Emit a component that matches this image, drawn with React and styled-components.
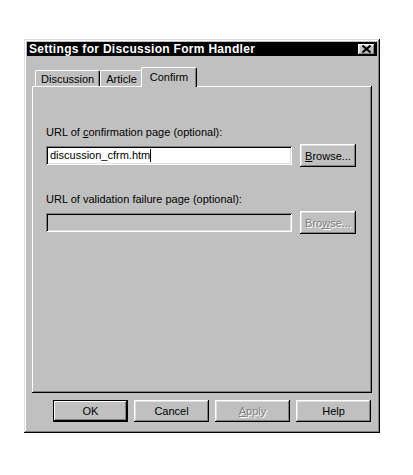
import React from "react";
import styled, { createGlobalStyle, css } from "styled-components";

const GlobalStyle = createGlobalStyle`
  html, body {
    margin: 0;
    padding: 0;
    background: #ffffff;
  }
  body {
    font-family: "Liberation Sans", Arial, sans-serif;
    font-size: 11px;
    color: #000000;
  }
`;

const raised = css`
  box-shadow: inset -1px -1px 0 #000000, inset 1px 1px 0 #ffffff,
    inset -2px -2px 0 #808080, inset 2px 2px 0 #dfdfdf;
`;

const sunken = css`
  box-shadow: inset 1px 1px 0 #808080, inset -1px -1px 0 #ffffff,
    inset 2px 2px 0 #000000, inset -2px -2px 0 #dfdfdf;
`;

const Page = styled.div`
  padding: 39px 0 0 24px;
  height: 475px;
  box-sizing: border-box;
`;

const Window = styled.div`
  width: 356px;
  height: 394px;
  box-sizing: border-box;
  background: #c0c0c0;
  padding: 3px;
  display: flex;
  flex-direction: column;
  box-shadow: inset -1px -1px 0 #000000, inset 1px 1px 0 #dfdfdf,
    inset -2px -2px 0 #808080, inset 2px 2px 0 #ffffff;
`;

const TitleBar = styled.div`
  height: 14px;
  background: #000000;
  color: #ffffff;
  display: flex;
  align-items: center;
  justify-content: space-between;
  padding: 0 2px 0 2px;
`;

const Title = styled.span`
  font-weight: bold;
  font-size: 12px;
  letter-spacing: 0.3px;
`;

const CloseButton = styled.div`
  width: 17px;
  height: 11px;
  background: #c0c0c0;
  color: #000000;
  display: flex;
  align-items: center;
  justify-content: center;
  ${raised}
`;

const Body = styled.div`
  flex: 1;
  display: flex;
  flex-direction: column;
  padding: 10px 5px 0 5px;
`;

const TabRow = styled.div`
  display: flex;
  align-items: flex-end;
  height: 20px;
  padding-left: 3px;
  position: relative;
  z-index: 1;
`;

const Tab = styled.div`
  height: ${(p) => (p.$active ? "20px" : "16px")};
  box-sizing: border-box;
  padding: ${(p) => (p.$active ? "3px 8px 0 8px" : "2px 5px 0 5px")};
  margin: ${(p) => (p.$active ? "0 -2px 0 -2px" : "0")};
  margin-bottom: ${(p) => (p.$active ? "-1px" : "0")};
  background: #c0c0c0;
  border-top: 1px solid #ffffff;
  border-left: 1px solid #ffffff;
  border-right: 1px solid #000000;
  border-radius: 2px 2px 0 0;
  box-shadow: inset -1px 0 0 #808080;
  position: relative;
  z-index: ${(p) => (p.$active ? 2 : 1)};
`;

const Panel = styled.div`
  height: 307px;
  box-sizing: border-box;
  background: #c0c0c0;
  padding: 40px 16px 0 14px;
  box-shadow: inset -1px -1px 0 #000000, inset 1px 1px 0 #ffffff,
    inset -2px -2px 0 #808080;
  display: flex;
  flex-direction: column;
`;

const FieldLabel = styled.div`
  line-height: 13px;
  margin-top: ${(p) => p.$gap || 0}px;
`;

const FieldRow = styled.div`
  display: flex;
  align-items: center;
  gap: 8px;
  margin-top: 5px;
  height: 23px;
`;

const TextField = styled.div`
  flex: 1;
  height: 19px;
  box-sizing: border-box;
  background: ${(p) => (p.$disabled ? "#c0c0c0" : "#ffffff")};
  padding: 3px 3px 0 4px;
  line-height: 13px;
  ${sunken}
`;

const Caret = styled.span`
  display: inline-block;
  width: 1px;
  height: 13px;
  background: #000000;
  vertical-align: top;
`;

const Button = styled.div`
  width: ${(p) => p.$w || 75}px;
  height: ${(p) => p.$h || 23}px;
  box-sizing: border-box;
  display: flex;
  align-items: center;
  justify-content: center;
  background: #c0c0c0;
  flex-shrink: 0;
  color: ${(p) => (p.$disabled ? "#808080" : "#000000")};
  text-shadow: ${(p) => (p.$disabled ? "1px 1px 0 #ffffff" : "none")};
  ${raised}
  ${(p) =>
    p.$default &&
    css`
      box-shadow: inset 0 0 0 1px #000000, inset -2px -2px 0 #000000,
        inset 2px 2px 0 #ffffff, inset -3px -3px 0 #808080;
    `}
`;

const ButtonRow = styled.div`
  display: flex;
  justify-content: flex-end;
  gap: 6px;
  margin-top: 7px;
  padding-right: 1px;
`;

const U = styled.span`
  text-decoration: underline;
`;

export default function App() {
  return (
    <>
      <GlobalStyle />
      <Page>
        <Window>
          <TitleBar>
            <Title>Settings for Discussion Form Handler</Title>
            <CloseButton>
              <svg width="9" height="8" viewBox="0 0 9 8">
                <path
                  d="M0.5 0.5 L8.5 7.5 M8.5 0.5 L0.5 7.5"
                  stroke="#000"
                  strokeWidth="2"
                />
              </svg>
            </CloseButton>
          </TitleBar>
          <Body>
            <TabRow>
              <Tab>Discussion</Tab>
              <Tab>Article</Tab>
              <Tab $active>Confirm</Tab>
            </TabRow>
            <Panel>
              <FieldLabel>
                URL of <U>c</U>onfirmation page (optional):
              </FieldLabel>
              <FieldRow>
                <TextField>
                  discussion_cfrm.htm
                  <Caret />
                </TextField>
                <Button $w={56}>
                  <span>
                    <U>B</U>rowse...
                  </span>
                </Button>
              </FieldRow>
              <FieldLabel $gap={26}>URL of validation failure page (optional):</FieldLabel>
              <FieldRow>
                <TextField $disabled />
                <Button $w={56} $disabled>
                  <span>
                    Bro<U>w</U>se...
                  </span>
                </Button>
              </FieldRow>
            </Panel>
            <ButtonRow>
              <Button $default $h={22}>OK</Button>
              <Button $h={22}>Cancel</Button>
              <Button $h={22} $disabled>
                <span>
                  <U>A</U>pply
                </span>
              </Button>
              <Button $h={22}>Help</Button>
            </ButtonRow>
          </Body>
        </Window>
      </Page>
    </>
  );
}
